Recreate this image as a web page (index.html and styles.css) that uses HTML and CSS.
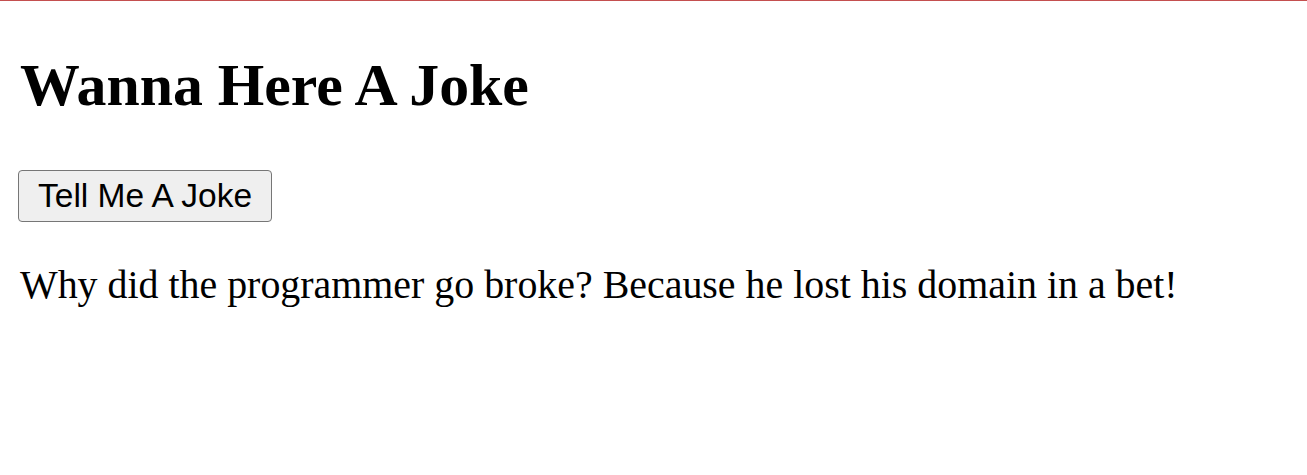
FILE: index.html
```html
<!DOCTYPE html>
<html>
<head>
<meta charset="utf-8">
<link rel="stylesheet" href="styles.css">
</head>
<body>
<div class="topbar"></div>
<main class="page">
  <h1 class="title">Wanna Here A Joke</h1>
  <button class="joke-btn">Tell Me A Joke</button>
  <p class="joke">Why did the programmer go broke? Because he lost his domain in a bet!</p>
</main>
</body>
</html>
```
FILE: styles.css
```css
html, body {
  margin: 0;
  padding: 0;
  background: #ffffff;
}
.topbar {
  height: 1px;
  background: #c44f4f;
}
.page {
  padding: 0 20px;
  display: flex;
  flex-direction: column;
  align-items: flex-start;
  font-family: "Liberation Serif", "Times New Roman", serif;
  color: #000;
}
.title {
  margin: 51px 0 0;
  font-size: 59.8px;
  line-height: 66px;
  font-weight: bold;
}
.joke-btn {
  margin: 52px 0 0 -2px;
  font-family: "Liberation Sans", Arial, sans-serif;
  font-size: 33.5px;
  line-height: 36px;
  padding: 7px 19px 7px 19px;
  background: #efefef;
  border: 1px solid #767676;
  border-radius: 4px;
  color: #000;
}
.joke {
  margin: 40px 0 0;
  font-size: 39.9px;
  line-height: 46px;
}
```
